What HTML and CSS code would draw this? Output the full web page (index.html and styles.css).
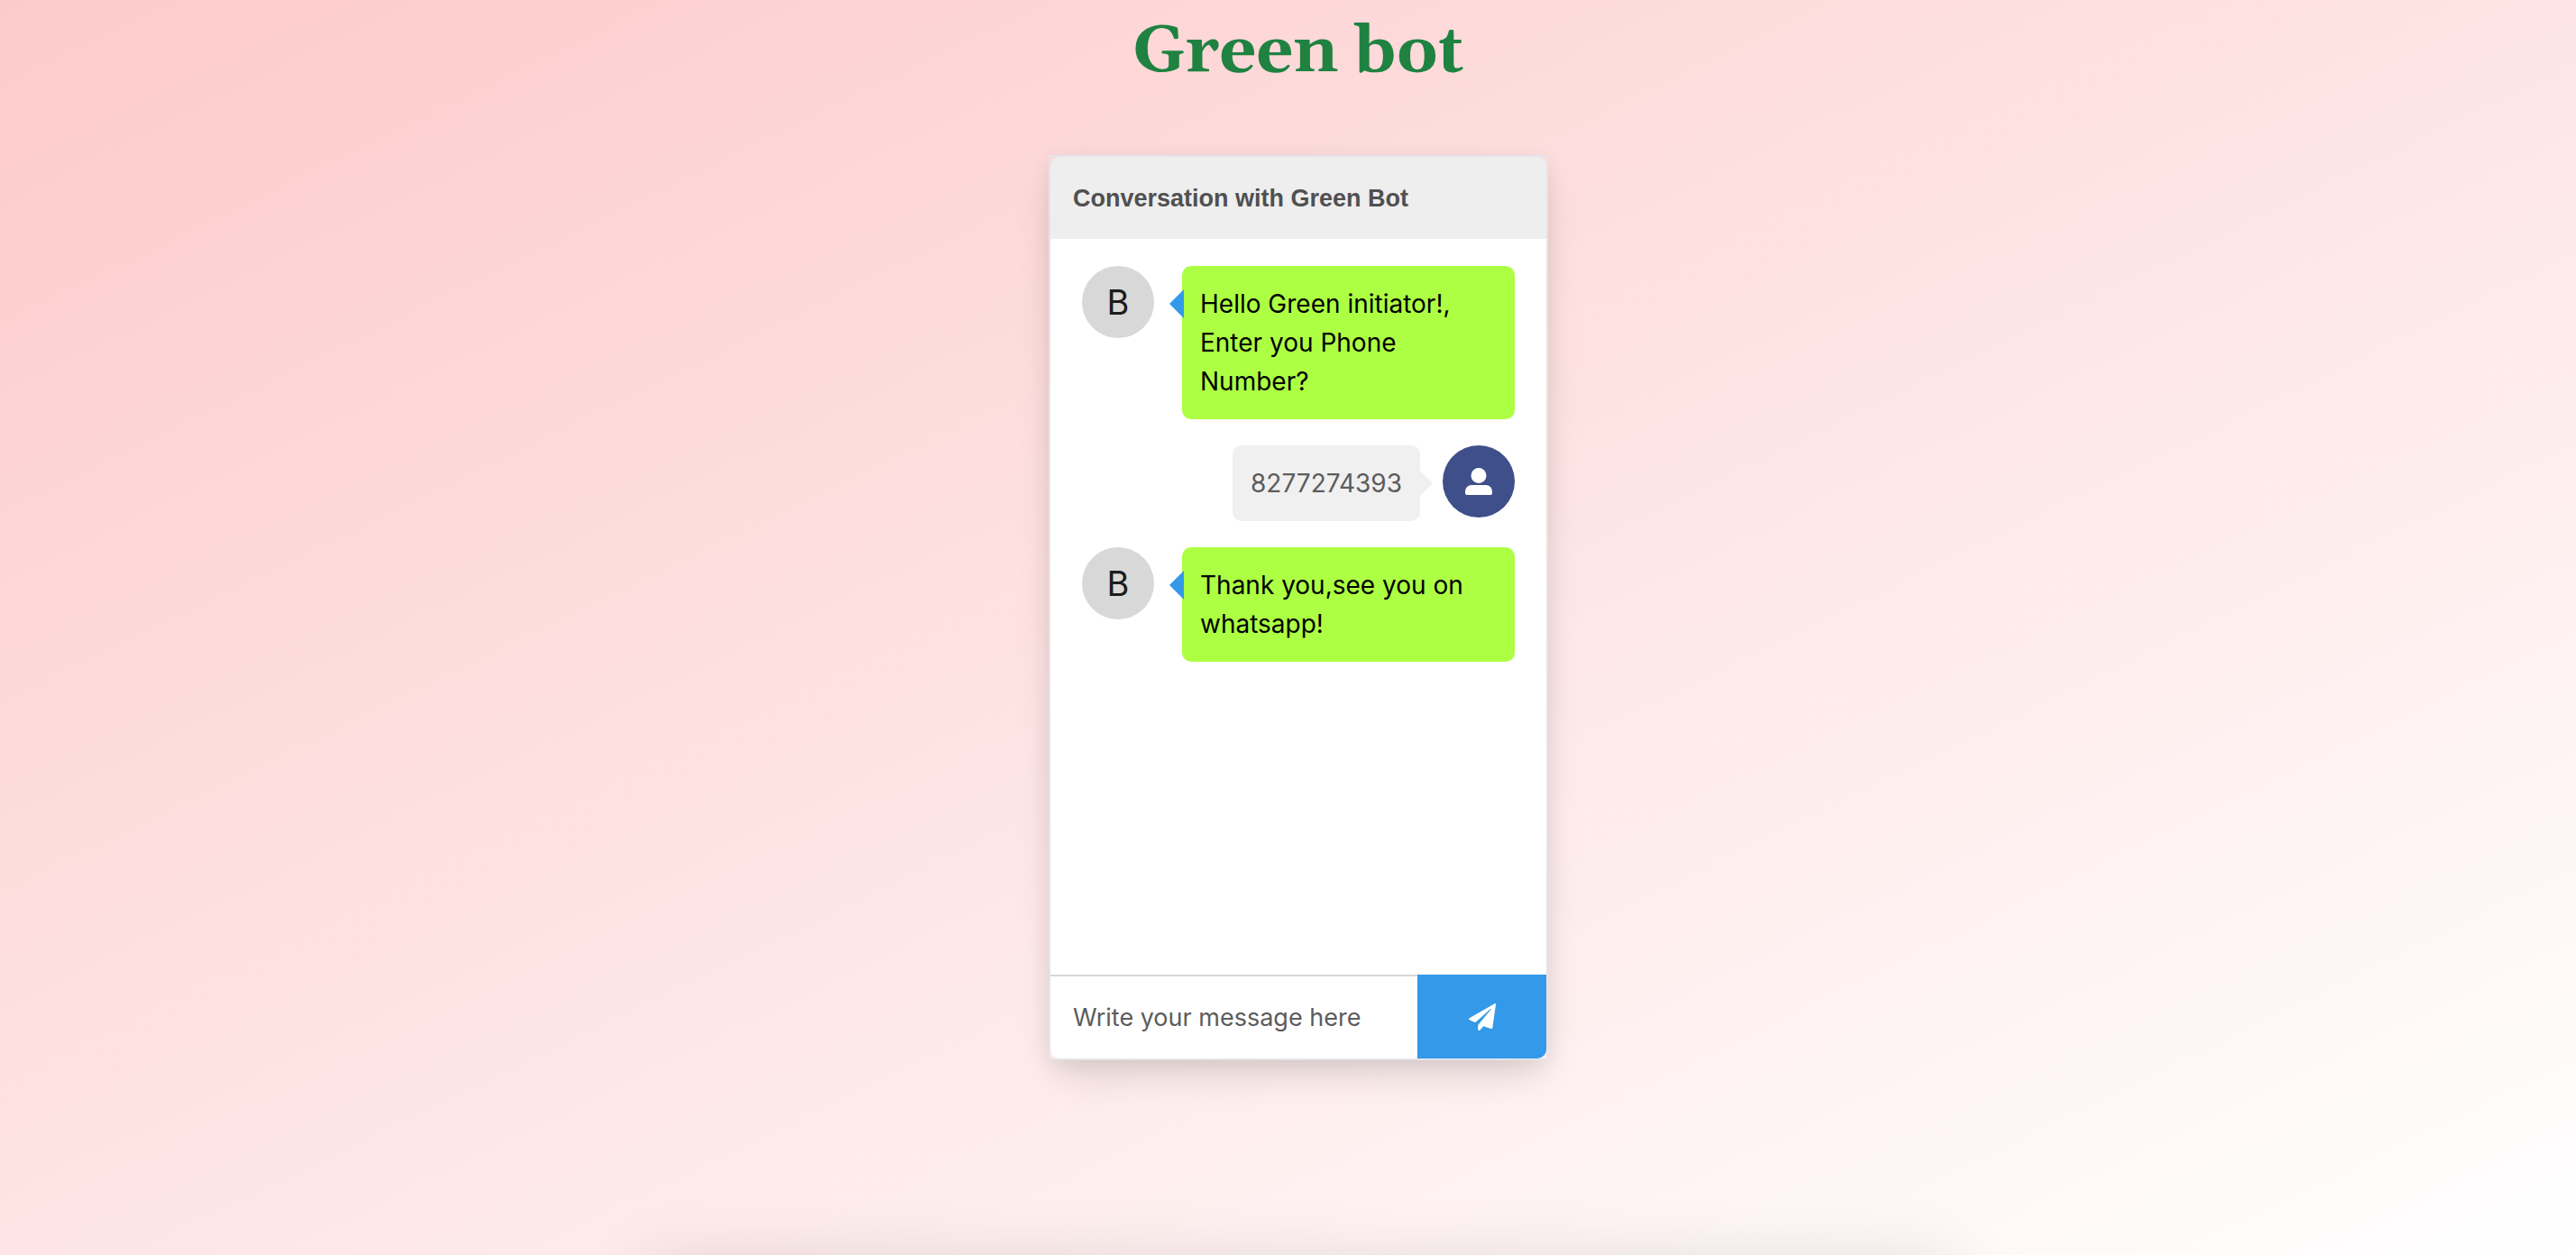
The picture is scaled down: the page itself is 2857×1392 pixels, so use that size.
FILE: index.html
```html
<!DOCTYPE html>
<html lang="en">
<head>
<meta charset="utf-8">
<meta name="viewport" content="width=device-width, initial-scale=1">
<title>Green bot</title>
<link rel="stylesheet" href="styles.css">
</head>
<body>
<main class="page">
  <h1 class="title">Green bot</h1>
  <section class="chat" aria-label="Chat">
    <header class="chat-header">Conversation with Green Bot</header>
    <div class="messages">
      <div class="message">
        <div class="avatar">B</div>
        <div class="bubble bubble-bot">Hello Green initiator!, Enter you Phone Number?</div>
      </div>
      <div class="message message-user">
        <div class="bubble bubble-user">8277274393</div>
        <div class="avatar avatar-user">
          <svg width="30" height="30" viewBox="0 0 30 30" fill="#fff" aria-hidden="true"><circle cx="15" cy="8.5" r="8.5"/><path d="M7 19h16a7 7 0 0 1 7 7v2a2 2 0 0 1-2 2H2a2 2 0 0 1-2-2v-2a7 7 0 0 1 7-7z"/></svg>
        </div>
      </div>
      <div class="message">
        <div class="avatar">B</div>
        <div class="bubble bubble-bot">Thank you,see you on whatsapp!</div>
      </div>
    </div>
    <form class="composer">
      <input class="composer-input" type="text" placeholder="Write your message here" aria-label="Write your message here">
      <button class="composer-send" type="button" aria-label="Send">
        <svg width="30" height="30" viewBox="0 0 30 30" fill="#fff" aria-hidden="true"><path d="M28.6.2.7 16.2C-.2 16.700-.2 17.800.7 18.200L6.300 20.700Q7.200 21.100 7.900 20.400L24.200 6.100C24.600 5.800 25 6.200 24.700 6.600L10.800 23.200Q10.200 23.900 10.200 24.700V28.800C10.200 30.100 11.700 30.500 12.500 29.600L16.200 25.200L24.600 28.100C25.400 28.400 26.200 27.900 26.300 27.100L30 1.200C30.200.3 29.400-.3 28.600.2z"/></svg>
      </button>
    </form>
  </section>
</main>
</body>
</html>
```
FILE: styles.css
```css
* { box-sizing: border-box; }

body {
  margin: 0;
  background: linear-gradient(to bottom right, #fdcaca, #fff);
  font-family: Inter, "Liberation Sans", sans-serif;
}

.page {
  position: relative;
  overflow: hidden;
  min-height: 100vh;
  display: flex;
  flex-direction: column;
  align-items: center;
  gap: 64px;
  padding-left: 23px;
}

/* soft shadow rising from the bottom edge */
.page::after {
  content: "";
  position: absolute;
  top: 100%;
  left: 25%;
  width: 51%;
  height: 100px;
  box-shadow: 0 12px 80px rgba(0, 0, 0, .13);
}

.title {
  margin: 0;
  padding-top: 8px;
  color: #1f8241;
  font: bold 72px/100px Georgia, Gelasio, "Liberation Serif", serif;
}

.chat {
  width: 554px;
  max-width: 100%;
  display: flex;
  flex-direction: column;
  border: 2px solid #e3e5e9;
  box-shadow: 0 20px 40px -8px rgba(0, 0, 0, .15), 0 4px 20px rgba(0, 0, 0, .05);
}

.chat-header {
  padding: 25px 25px 24px;
  background: #eee;
  border-radius: 10px 10px 0 0;
  color: #505050;
  font: bold 27px/42px "Liberation Sans", Arial, sans-serif;
}

.messages {
  display: flex;
  flex-direction: column;
  gap: 29px;
  min-height: 816px;
  padding: 30px 35px;
  background: #fff;
}

.message {
  display: flex;
  align-items: flex-start;
  gap: 31px;
}

.message-user {
  justify-content: flex-end;
  gap: 25px;
}

.avatar {
  flex: none;
  display: flex;
  align-items: center;
  justify-content: center;
  width: 80px;
  height: 80px;
  border-radius: 50%;
  background: #d8d8d8;
  color: #1c1c1c;
  font-size: 38px;
}

.avatar-user { background: #3e4f8a; }

.bubble {
  position: relative;
  padding: 21px 20px 20px;
  border-radius: 10px;
  font-size: 28px;
  line-height: 43px;
}

.bubble-bot {
  flex: 1;
  background: #adff43;
  color: #000;
}

.bubble-user {
  background: #f0f0f0;
  color: #5c5c5c;
}

.bubble::before {
  content: "";
  position: absolute;
  top: 26px;
  border: 16px solid transparent;
}

.bubble-bot::before {
  right: calc(100% - 2px);
  border-left-width: 0;
  border-right-color: #3399e8;
}

.bubble-user::before {
  left: calc(100% - 2px);
  border-right-width: 0;
  border-left-color: #f0f0f0;
}

.composer {
  display: flex;
  height: 93px;
}

.composer-input {
  flex: 1;
  min-width: 0;
  padding: 0 25px;
  border: 0;
  border-top: 2px solid #d6d6d6;
  border-radius: 0 0 0 10px;
  background: #fff;
  font: 27px/40px Inter, "Liberation Sans", sans-serif;
}

.composer-input::placeholder {
  color: #5c5c5c;
  opacity: 1;
}

.composer-send {
  display: flex;
  align-items: center;
  justify-content: center;
  width: 26%;
  padding: 0;
  border: 0;
  border-radius: 0 0 10px 0;
  background: #3399e8;
}
```
